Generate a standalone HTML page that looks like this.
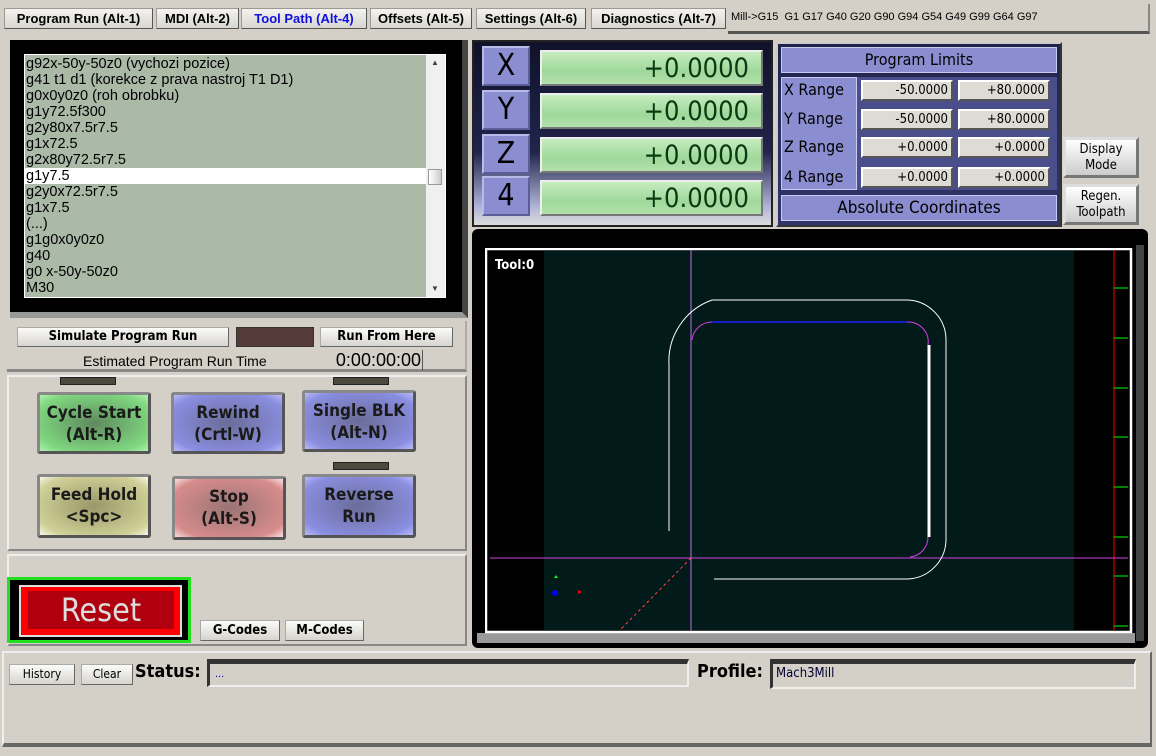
<!DOCTYPE html>
<html><head><meta charset="utf-8"><style>
*{margin:0;padding:0;box-sizing:border-box}
body{width:1156px;height:756px;background:#d4d0c8;font-family:"Liberation Sans",sans-serif;position:relative;overflow:hidden}
.a{position:absolute}
.tab{position:absolute;top:8px;height:21px;background:linear-gradient(#f4f3f0,#d8d6d0);border:1px solid #9c9a94;border-right-color:#555;border-bottom-color:#555;font-size:13px;font-weight:bold;text-align:center;line-height:19px;color:#000;white-space:nowrap;overflow:hidden}
.btn{position:absolute;background:linear-gradient(#fbfbfa,#d6d4ce);border:1px solid #aaa;border-right-color:#666;border-bottom-color:#666;font-size:13px;font-weight:bold;text-align:center;color:#000;white-space:nowrap}
.code{position:absolute;left:26px;font-size:14.5px;color:#000;height:16px;line-height:16px;white-space:nowrap}
.let{position:absolute;left:482px;width:48px;height:40px;background:#8a8ed0;border:2px solid #5a5e9a;border-top-color:#b8bbe8;border-left-color:#b8bbe8;font-size:30px;text-align:center;line-height:36px;color:#000;font-family:"DejaVu Sans Condensed","DejaVu Sans",sans-serif}
.val{position:absolute;left:540px;width:223px;height:36px;background:linear-gradient(#c6ecc0,#9fd89a 60%,#b2e0ac);border:2px solid #eee;border-right-color:#777;border-bottom-color:#777;font-size:27px;text-align:right;padding-right:12px;line-height:33px;color:#0a3a10;font-family:"DejaVu Sans Condensed","DejaVu Sans",sans-serif}
.rl{position:absolute;left:784px;font-size:16px;font-family:"DejaVu Sans Condensed",sans-serif;color:#000}
.rv{position:absolute;width:92px;height:21px;background:#dedbd4;border:2px solid #fff;border-right-color:#555;border-bottom-color:#555;font-size:13px;text-align:right;padding-right:3px;line-height:17px;font-family:"DejaVu Sans Condensed","DejaVu Sans",sans-serif}
.big{position:absolute;width:114px;height:62px;border:3px solid #555;border-top-color:#888;border-left-color:#888;border-radius:3px;font-family:"DejaVu Sans Condensed","DejaVu Sans",sans-serif;font-weight:bold;font-size:17px;text-align:center;line-height:22px;padding-top:7px;color:#1a1a1a;white-space:nowrap}
.ind{position:absolute;width:56px;height:8px;background:#4c4a3c;border:1px solid #222}
</style></head><body>
<!-- tabs -->
<div class="tab" style="left:4px;width:149px">Program Run (Alt-1)</div>
<div class="tab" style="left:156px;width:83px">MDI (Alt-2)</div>
<div class="tab" style="left:241px;width:126px;color:#1010e0">Tool Path (Alt-4)</div>
<div class="tab" style="left:370px;width:102px">Offsets (Alt-5)</div>
<div class="tab" style="left:476px;width:110px">Settings (Alt-6)</div>
<div class="tab" style="left:591px;width:135px">Diagnostics (Alt-7)</div>
<div class="a" style="left:728px;top:4px;width:422px;height:30px;border-bottom:3px solid #555;border-right:2px solid #888;font-size:11px;line-height:26px;padding-left:3px;white-space:nowrap">Mill-&gt;G15&nbsp; G1 G17 G40 G20 G90 G94 G54 G49 G99 G64 G97</div>

<!-- code panel -->
<div class="a" style="left:10px;top:40px;width:458px;height:278px;background:#000;border-right:6px solid #444;border-bottom:6px solid #999"></div>
<div class="a" style="left:24px;top:54px;width:422px;height:244px;background:#abbaa7;border:1px solid #fff"></div>
<div class="a" style="left:426px;top:55px;width:19px;height:242px;background:#f0f0f0"></div>
<div class="a" style="left:428px;top:169px;width:14px;height:16px;background:linear-gradient(90deg,#fff,#ccc);border:1px solid #999"></div>
<div class="a" style="left:431px;top:58px;font-size:8px;color:#444">▲</div>
<div class="a" style="left:431px;top:284px;font-size:8px;color:#444">▼</div>
<div class="a" style="left:25px;top:168px;width:401px;height:16px;background:#fff"></div>
<div class="code" style="top:56px">g92x-50y-50z0 (vychozi pozice)</div>
<div class="code" style="top:72px">g41 t1 d1 (korekce z prava nastroj T1 D1)</div>
<div class="code" style="top:88px">g0x0y0z0 (roh obrobku)</div>
<div class="code" style="top:104px">g1y72.5f300</div>
<div class="code" style="top:120px">g2y80x7.5r7.5</div>
<div class="code" style="top:136px">g1x72.5</div>
<div class="code" style="top:152px">g2x80y72.5r7.5</div>
<div class="code" style="top:168px">g1y7.5</div>
<div class="code" style="top:184px">g2y0x72.5r7.5</div>
<div class="code" style="top:200px">g1x7.5</div>
<div class="code" style="top:216px">(...)</div>
<div class="code" style="top:232px">g1g0x0y0z0</div>
<div class="code" style="top:248px">g40</div>
<div class="code" style="top:264px">g0 x-50y-50z0</div>
<div class="code" style="top:280px">M30</div>

<!-- DRO -->
<div class="a" style="left:472px;top:40px;width:301px;height:187px;background:linear-gradient(#10122a,#20244a 60%,#b0b4d8 90%,#ddd);border:2px solid #222"></div>
<div class="let" style="top:46px">X</div><div class="val" style="top:50px">+0.0000</div>
<div class="let" style="top:90px">Y</div><div class="val" style="top:93px">+0.0000</div>
<div class="let" style="top:134px">Z</div><div class="val" style="top:137px">+0.0000</div>
<div class="let" style="top:176px">4</div><div class="val" style="top:180px">+0.0000</div>

<!-- limits -->
<div class="a" style="left:776px;top:42px;width:286px;height:185px;background:linear-gradient(#20244a,#30346a);border:2px solid #ccc;border-right-color:#333;border-bottom-color:#333"></div>
<div class="a" style="left:781px;top:47px;width:276px;height:26px;background:#8a8ed0;border:1px solid #c8caf0;font-family:'DejaVu Sans Condensed',sans-serif;font-size:16px;text-align:center;line-height:24px">Program Limits</div>
<div class="a" style="left:781px;top:77px;width:76px;height:113px;background:#8a8ed0;border:1px solid #c8caf0"></div>
<div class="a" style="left:857px;top:77px;width:200px;height:113px;background:#4a4e8a"></div>
<div class="rl" style="top:80px">X Range</div><div class="rv" style="left:861px;top:80px">-50.0000</div><div class="rv" style="left:958px;top:80px">+80.0000</div>
<div class="rl" style="top:109px">Y Range</div><div class="rv" style="left:861px;top:109px">-50.0000</div><div class="rv" style="left:958px;top:109px">+80.0000</div>
<div class="rl" style="top:137px">Z Range</div><div class="rv" style="left:861px;top:137px">+0.0000</div><div class="rv" style="left:958px;top:137px">+0.0000</div>
<div class="rl" style="top:167px">4 Range</div><div class="rv" style="left:861px;top:167px">+0.0000</div><div class="rv" style="left:958px;top:167px">+0.0000</div>
<div class="a" style="left:781px;top:195px;width:276px;height:26px;background:#8a8ed0;border:1px solid #c8caf0;font-family:'DejaVu Sans Condensed',sans-serif;font-size:17px;text-align:center;line-height:24px">Absolute Coordinates</div>
<div class="a" style="left:1063px;top:137px;width:76px;height:41px;background:linear-gradient(#fff,#ccc);border:3px solid #777;border-top-color:#ddd;border-left-color:#ddd;font-family:'DejaVu Sans Condensed',sans-serif;font-size:13px;text-align:center;line-height:16px;padding-top:2px">Display<br>Mode</div>
<div class="a" style="left:1063px;top:184px;width:76px;height:41px;background:linear-gradient(#fff,#ccc);border:3px solid #777;border-top-color:#ddd;border-left-color:#ddd;font-family:'DejaVu Sans Condensed',sans-serif;font-size:13px;text-align:center;line-height:16px;padding-top:2px">Regen.<br>Toolpath</div>

<!-- toolpath -->
<div class="a" style="left:472px;top:229px;width:676px;height:419px;background:#000;border-radius:6px"></div>
<div class="a" style="left:477px;top:633px;width:658px;height:10px;background:#999"></div>
<div class="a" style="left:1136px;top:245px;width:8px;height:396px;background:#444"></div>
<svg class="a" style="left:485px;top:248px" width="648" height="386" viewBox="485 248 648 386">
<rect x="486" y="249" width="645" height="383" fill="#000" stroke="#fff" stroke-width="2.5"/>
<rect x="544" y="251" width="530" height="379" fill="#021a1a"/>
<line x1="1114" y1="250" x2="1114" y2="631" stroke="#f00"/>
<g stroke="#0f0"><line x1="1114" x2="1128" y1="288" y2="288"/><line x1="1114" x2="1128" y1="338" y2="338"/><line x1="1114" x2="1128" y1="388" y2="388"/><line x1="1114" x2="1128" y1="437" y2="437"/><line x1="1114" x2="1128" y1="487" y2="487"/><line x1="1114" x2="1128" y1="537" y2="537"/><line x1="1114" x2="1128" y1="576" y2="576"/><line x1="1114" x2="1128" y1="626" y2="626"/></g>
<line x1="691" y1="250" x2="691" y2="631" stroke="#c070e0"/>
<line x1="490" y1="558" x2="1128" y2="558" stroke="#d040e0"/>
<line x1="691" y1="558" x2="620" y2="630" stroke="#f44" stroke-dasharray="3 3"/>
<path d="M669 531 V365 A65 65 0 0 1 712 300 H907 A40 40 0 0 1 946 340 V541 A40 40 0 0 1 908 579 H714" fill="none" stroke="#fff" stroke-width="1"/>
<path d="M692 340 A20 20 0 0 1 712 322" fill="none" stroke="#d040e0"/>
<line x1="712" y1="322" x2="907" y2="322" stroke="#2020ff" stroke-width="1.5"/>
<path d="M907 322 A20 20 0 0 1 928 345" fill="none" stroke="#d040e0"/>
<line x1="929" y1="345" x2="929" y2="537" stroke="#fff" stroke-width="3"/>
<path d="M928 537 A20 20 0 0 1 910 557" fill="none" stroke="#d040e0"/>
<path d="M554 578 l2 -3 l2 3z" fill="#0f0"/>
<circle cx="555" cy="593" r="3" fill="#00f"/>
<path d="M578 590 l4 2 l-4 2z" fill="#f00"/>
<text x="495" y="269" fill="#fff" font-family="DejaVu Sans Condensed" font-weight="bold" font-size="13">Tool:0</text>
</svg>

<!-- run panel -->
<div class="a" style="left:7px;top:321px;width:460px;height:51px;border-bottom:3px solid #888;border-right:2px solid #aaa"></div>
<div class="btn" style="left:17px;top:327px;width:212px;height:20px;line-height:18px;font-family:'DejaVu Sans Condensed',sans-serif;font-size:13px">Simulate Program Run</div>
<div class="a" style="left:236px;top:327px;width:78px;height:20px;background:#553a3a;border:1px solid #333"></div>
<div class="btn" style="left:320px;top:327px;width:133px;height:20px;line-height:18px;font-family:'DejaVu Sans Condensed',sans-serif;font-size:13px">Run From Here</div>
<div class="a" style="left:83px;top:353px;font-size:14px">Estimated Program Run Time</div>
<div class="a" style="left:320px;top:350px;width:103px;height:21px;border-bottom:1px solid #888;border-right:1px solid #555;font-size:18px;text-align:right;line-height:21px;padding-right:1px">0:00:00:00</div>

<!-- buttons panel -->
<div class="a" style="left:7px;top:375px;width:460px;height:176px;border:2px solid #eee;border-right-color:#888;border-bottom-color:#888"></div>
<div class="ind" style="left:60px;top:377px"></div>
<div class="ind" style="left:333px;top:377px"></div>
<div class="ind" style="left:333px;top:462px"></div>
<div class="big" style="left:37px;top:392px;background:radial-gradient(ellipse at 50% 50%,#5e8a5e,#80d880 80%,#b0f0b0)">Cycle Start<br>(Alt-R)</div>
<div class="big" style="left:171px;top:392px;background:radial-gradient(ellipse at 50% 50%,#6a6c98,#8a8ee0 80%,#b8baf8)">Rewind<br>(Crtl-W)</div>
<div class="big" style="left:302px;top:390px;background:radial-gradient(ellipse at 50% 50%,#6a6c98,#8a8ee0 80%,#b8baf8)">Single BLK<br>(Alt-N)</div>
<div class="big" style="left:37px;top:474px;height:64px;background:radial-gradient(ellipse at 50% 50%,#9a9868,#d0d098 80%,#f8f8e8)">Feed Hold<br>&lt;Spc&gt;</div>
<div class="big" style="left:172px;top:476px;height:64px;background:radial-gradient(ellipse at 50% 50%,#9a7474,#d88c8c 80%,#f8e0e0)">Stop<br>(Alt-S)</div>
<div class="big" style="left:302px;top:474px;height:64px;background:radial-gradient(ellipse at 50% 50%,#6a6c98,#8a8ee0 80%,#b8baf8)">Reverse<br>Run</div>

<!-- reset panel -->
<div class="a" style="left:7px;top:554px;width:460px;height:92px;border:2px solid #eee;border-right-color:#888;border-bottom-color:#888"></div>
<div class="a" style="left:7px;top:577px;width:184px;height:66px;background:#000;border:3px solid #20e020"></div>
<div class="a" style="left:19px;top:585px;width:163px;height:52px;background:#f00;border:2px solid #ddd"></div>
<div class="a" style="left:28px;top:591px;width:146px;height:38px;background:#b00010;font-family:'DejaVu Sans Condensed',sans-serif;font-size:32px;color:#ddd;text-align:center;line-height:38px">Reset</div>
<div class="btn" style="left:200px;top:620px;width:80px;height:21px;line-height:19px;font-family:'DejaVu Sans Condensed',sans-serif;font-size:13px">G-Codes</div>
<div class="btn" style="left:285px;top:620px;width:79px;height:21px;line-height:19px;font-family:'DejaVu Sans Condensed',sans-serif;font-size:13px">M-Codes</div>

<!-- bottom -->
<div class="a" style="left:2px;top:651px;width:1150px;height:96px;border:2px solid #eee;border-right-color:#666;border-bottom:4px solid #666"></div>
<div class="btn" style="left:9px;top:664px;width:66px;height:21px;line-height:19px;font-family:'DejaVu Sans Condensed',sans-serif;font-size:12px;font-weight:normal">History</div>
<div class="btn" style="left:81px;top:664px;width:52px;height:21px;line-height:19px;font-family:'DejaVu Sans Condensed',sans-serif;font-size:12px;font-weight:normal">Clear</div>
<div class="a" style="left:135px;top:661px;font-family:'DejaVu Sans Condensed',sans-serif;font-weight:bold;font-size:18px">Status:</div>
<div class="a" style="left:207px;top:659px;width:482px;height:28px;border:2px solid #eee;border-top:5px solid #333;border-left:3px solid #333;font-size:11px;color:#00c;padding:4px 5px">...</div>
<div class="a" style="left:697px;top:661px;font-family:'DejaVu Sans Condensed',sans-serif;font-weight:bold;font-size:18px">Profile:</div>
<div class="a" style="left:770px;top:659px;width:366px;height:30px;border:2px solid #eee;border-top:5px solid #333;border-left:3px solid #333;font-family:'DejaVu Sans Condensed',sans-serif;font-size:13px;color:#003;padding:2px 3px">Mach3Mill</div>
</body></html>
